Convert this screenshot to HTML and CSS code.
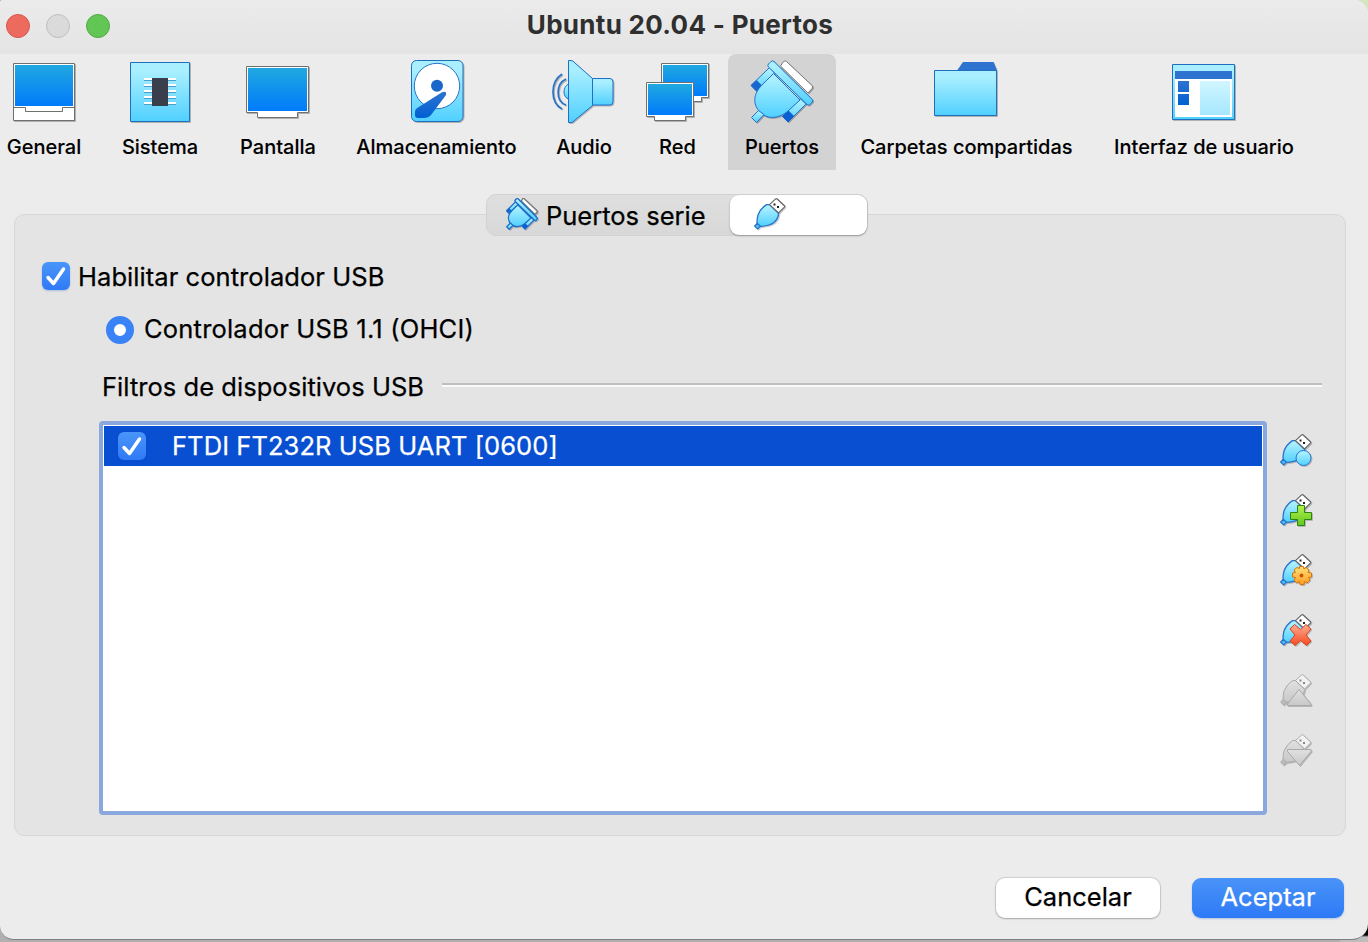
FILE: index.html
```html
<!DOCTYPE html>
<html lang="es">
<head>
<meta charset="utf-8">
<title>Ubuntu 20.04 - Puertos</title>
<link rel="stylesheet" href="styles.css">
</head>
<body>
<svg class="defs" width="0" height="0" aria-hidden="true">
  <defs>
    <linearGradient id="screen" x1="0" y1="0" x2="0" y2="1"><stop offset="0" stop-color="#20a8e0"/><stop offset="1" stop-color="#007bfb"/></linearGradient>
    <linearGradient id="sky" x1="0" y1="0" x2="0" y2="1"><stop offset=".15" stop-color="#a9efff"/><stop offset="1" stop-color="#50d0ff"/></linearGradient>
    <linearGradient id="navy" x1="0" y1="0" x2="0" y2="1"><stop offset="0" stop-color="#2e73cf"/><stop offset="1" stop-color="#0060d2"/></linearGradient>
    <linearGradient id="pane" x1="0" y1="0" x2="0" y2="1"><stop offset="0" stop-color="#d0f6ff"/><stop offset="1" stop-color="#a6e7ff"/></linearGradient>
    <linearGradient id="green" x1="0" y1="0" x2="0" y2="1"><stop offset="0" stop-color="#b4f04e"/><stop offset="1" stop-color="#62c81d"/></linearGradient>
    <linearGradient id="orange" x1="0" y1="0" x2="0" y2="1"><stop offset="0" stop-color="#ffe17a"/><stop offset="1" stop-color="#ff9d22"/></linearGradient>
    <linearGradient id="red" x1="0" y1="0" x2="0" y2="1"><stop offset="0" stop-color="#ffac91"/><stop offset="1" stop-color="#f64a20"/></linearGradient>
    <linearGradient id="grey" x1="0" y1="0" x2="0" y2="1"><stop offset="0" stop-color="#e0e0e0"/><stop offset="1" stop-color="#c8c8c8"/></linearGradient>
    <symbol id="usb" viewBox="0 0 32 32">
      <path d="M15.500 6.600H12.500Q6.500 10.500 4 17Q2.600 22 3.200 26.500L5.200 28.300Q15 28.300 20 24.500Q24.300 20.500 24.600 15.600Z" fill="url(#sky)" stroke="#2873ca" stroke-width="1.300"/>
      <path d="M3.400 25.300L.6 28L3.700 31L6.500 28.300Z" fill="#4fbdf2" stroke="#2873ca" stroke-width="1.200"/>
      <path d="M15.500 6.600L21.600 .9Q22.400.3 23.200 1L30.400 7.700Q31 8.400 30.400 9.200L24.600 14.900Z" fill="#fff" stroke="#666" stroke-width="1.200"/>
      <path d="M19.500 5.500h2v2h-2zM23 8h2v2h-2z" fill="#222"/>
    </symbol>
    <symbol id="usb-off" viewBox="0 0 32 32">
      <path d="M15.500 6.600H12.500Q6.500 10.500 4 17Q2.600 22 3.200 26.500L5.200 28.300Q15 28.300 20 24.500Q24.300 20.500 24.600 15.600Z" fill="url(#grey)" stroke="#aaa"/>
      <path d="M3.400 25.300L.6 28L3.700 31L6.500 28.300Z" fill="#bbb" stroke="#aaa"/>
      <path d="M15.500 6.600L21.600 .9Q22.400.3 23.200 1L30.400 7.700Q31 8.400 30.400 9.200L24.600 14.900Z" fill="#f2f2f2" stroke="#a8a8a8"/>
      <path d="M19.500 5.500h2v2h-2zM23 8h2v2h-2z" fill="#888"/>
    </symbol>
    <symbol id="serial" viewBox="0 0 64 64">
      <path d="M30.500 6L33.500 1.500Q35 .2 36.500 1.500L62 25.500Q63.300 27 62 28.500L58 33Z" fill="#fff" stroke="#777"/>
      <path d="M19.500 7.500L1 25.500L6.500 31L25 13.500Z" fill="url(#sky)" stroke="#2473c9"/>
      <path d="M50 38.500L32.500 56.500L38 62L56 44Z" fill="url(#sky)" stroke="#2473c9"/>
      <path d="M6.500 20L.8 25.300L6.500 31.200L12.500 26Z" fill="#1767cf"/>
      <path d="M38.500 50.500L32.300 56.500L38 62.200L44 56Z" fill="#0a5fd2"/>
      <path d="M23.500 13.500L12 25C3 34 3 44 9 51C16 60 29 59 38 51L50 40Z" fill="url(#sky)" stroke="#1f6fc9"/>
      <path d="M8.500 50.500L1.500 57.500L6.500 62.500L14 54.500Z" fill="url(#sky)" stroke="#1f6fc9"/>
      <path d="M18.500 4L21 1.500Q22.500.3 24 1.500L62.300 39.500Q63.300 41 62.300 42L60 44.500Q58.500 45.800 57 44.500L18.500 7Q17 5.500 18.500 4Z" fill="url(#sky)" stroke="#1f6fc9"/>
    </symbol>
  </defs>
</svg>
<div class="window">
  <header class="titlebar">
    <div class="lights"><i class="light close"></i><i class="light minimize"></i><i class="light zoom"></i></div>
    <h1 class="title">Ubuntu 20.04 - Puertos</h1>
  </header>
  <nav class="toolbar">
    <div class="tool">
      <svg class="icon" viewBox="0 0 64 64"><path d="M1.500 3.500h61v57h-61z" fill="#fff" stroke="#707070"/><path d="M3 5h58v41H3z" fill="url(#screen)"/><path d="M1.500 47.500h12v4h37v-4h12" fill="none" stroke="#707070"/></svg>
      <span class="name">General</span>
    </div>
    <div class="tool">
      <svg class="icon" viewBox="0 0 64 64"><path d="M2.500 2.500h59v59h-59z" fill="url(#sky)" stroke="#1f6fbd"/><path d="M16 20.500h32M16 26.500h32M16 32.500h32M16 38.500h32M16 44.500h32" stroke="#4c9fc8"/><path d="M16 19h32M16 25h32M16 31h32M16 37h32M16 43h32" stroke="#fff" stroke-width="2"/><path d="M24 18h16v28H24z" fill="#393f4b"/></svg>
      <span class="name">Sistema</span>
    </div>
    <div class="tool">
      <svg class="icon" viewBox="0 0 64 64"><path d="M.5 6.500h62v46h-11v5h-40v-5H.5z" fill="#fff" stroke="#707070"/><path d="M2 8h59v43H2z" fill="url(#screen)"/></svg>
      <span class="name">Pantalla</span>
    </div>
    <div class="tool">
      <svg class="icon" viewBox="0 0 64 64"><rect x="6.500" y=".5" width="51.500" height="61" rx="5" fill="url(#sky)" stroke="#1f6fbd"/><circle cx="32" cy="26" r="22.700" fill="#fff" stroke="#2873ca"/><circle cx="32" cy="25.800" r="6" fill="#1a67cc"/><path d="M37 32.200Q42 30.500 41 35L26 55Q23.500 58 20 58H13Q10 58 10 55V51.500Q10 49 13 47.500Z" fill="url(#navy)"/></svg>
      <span class="name">Almacenamiento</span>
    </div>
    <div class="tool tool-audio">
      <svg class="icon" viewBox="0 0 64 64"><path d="M16.500 24C10.500 27 10.500 37 16.500 39" fill="url(#sky)" stroke="#1f6fc9"/><path d="M10 14C-2 22-2 42 10 49M14 19C3.500 24 3.500 41 14 45" fill="none" stroke="#2873ca" stroke-width="1.700"/><path d="M16.500.5H19Q21 .5 23 3L40.500 18.500V45.500L23 60Q21 62.500 19 62.500H16.500Z" fill="url(#sky)" stroke="#1f6fc9"/><path d="M40.500 18.500H58Q61 18.500 61 22V41.500Q61 45 58 45H40.500Z" fill="url(#sky)" stroke="#1f6fc9"/></svg>
      <span class="name">Audio</span>
    </div>
    <div class="tool">
      <svg class="icon" viewBox="0 0 64 64"><path d="M15.500 3.500h47v34h-7v4h-31v-4h-9z" fill="#fff" stroke="#707070"/><path d="M17 5h44v31H17z" fill="url(#screen)"/><path d="M.5 22.500h47v34h-8v4h-31v-4h-8z" fill="#fff" stroke="#707070"/><path d="M2 24h44v31H2z" fill="url(#screen)"/></svg>
      <span class="name">Red</span>
    </div>
    <div class="tool active">
      <svg class="icon" viewBox="0 0 64 64"><use href="#serial"/></svg>
      <span class="name">Puertos</span>
    </div>
    <div class="tool">
      <svg class="icon icon-folder" viewBox="0 0 64 64"><path d="M23 10.500L29 2h30.500L63 10.500z" fill="#2e73cf"/><path d="M.5 10.500h62v45H.5z" fill="url(#sky)" stroke="#1f6fbd"/></svg>
      <span class="name">Carpetas compartidas</span>
    </div>
    <div class="tool">
      <svg class="icon" viewBox="0 0 64 64"><path d="M.5 4.500h62v55H.5z" fill="url(#sky)" stroke="#1f6fbd"/><path d="M3 19h57v38H3z" fill="#fff"/><path d="M3 11h57v8H3z" fill="#2e73cf"/><path d="M6 21h11v11H6zM6 34h11v11H6z" fill="url(#navy)"/><path d="M28 21h30v34H28z" fill="url(#pane)"/></svg>
      <span class="name">Interfaz de usuario</span>
    </div>
  </nav>
  <main class="panel">
    <div class="tabs">
      <div class="tab"><svg class="small-icon" viewBox="0 0 64 64"><use href="#serial" class="bold-lines"/></svg><span class="tab-text">Puertos serie</span></div>
      <div class="tab selected"><svg class="small-icon" viewBox="0 0 32 32"><use href="#usb"/></svg></div>
    </div>
    <div class="option enable">
      <span class="check"><svg viewBox="0 0 28 28"><path d="M6 15.500L11.500 21.500L21.500 7" /></svg></span>
      <span class="enable-text">Habilitar controlador USB</span>
    </div>
    <div class="option controller"><span class="radio"></span><span class="controller-text">Controlador USB 1.1 (OHCI)</span></div>
    <div class="filters-head"><span class="filters-text">Filtros de dispositivos USB</span><span class="rule"></span></div>
    <div class="filters">
      <div class="list">
        <div class="row"><span class="check"><svg viewBox="0 0 28 28"><path d="M6 15.500L11.500 21.500L21.500 7" /></svg></span><span class="row-text">FTDI FT232R USB UART [0600]</span></div>
      </div>
      <div class="actions">
        <svg class="small-icon" viewBox="0 0 32 32"><use href="#usb"/><circle cx="23.500" cy="24" r="7.500" fill="url(#sky)" stroke="#2873ca"/></svg>
        <svg class="small-icon" viewBox="0 0 32 32"><use href="#usb"/><path d="M17.500 11.500h7v7h7v7h-7v6h-7v-6h-7v-7h7z" fill="url(#green)" stroke="#2b8510"/></svg>
        <svg class="small-icon" viewBox="0 0 32 32"><use href="#usb"/><path d="M19.500 12.500h4l.5 2.500 2-1.500 3 2.500-1 2.500 3.500.5v4l-3 .5 1.500 2.500-3 3-2.500-1.500-.5 3h-4l-.5-3-3 1.500-2.500-3 1.500-2.500-3-.5v-4l3-.5-1.500-2.500 3-2.500 2.500 1z" fill="url(#orange)" stroke="#d9730b"/><circle cx="21.500" cy="21.500" r="1.900" fill="#c85106"/></svg>
        <svg class="small-icon" viewBox="0 0 32 32"><use href="#usb"/><path d="M14.500 10.500L20.500 15.500L26 10.500L31 15L26 21L31 27L26.500 31.500L20.500 26.500L15 31.500L10 27L15 21L10 15Z" fill="url(#red)" stroke="#d64220"/></svg>
        <svg class="small-icon" viewBox="0 0 32 32"><use href="#usb-off"/><path d="M19 15.500L31 30V31.500H7.500V30Z" fill="url(#grey)" stroke="#aaa"/></svg>
        <svg class="small-icon" viewBox="0 0 32 32"><use href="#usb-off"/><path d="M7.500 15.500H31V17.500L19.500 31.500L7.500 17.500Z" fill="url(#grey)" stroke="#aaa"/></svg>
      </div>
    </div>
  </main>
  <footer class="buttons"><div class="button"><span class="cancel-text">Cancelar</span></div><div class="button primary"><span class="accept-text">Aceptar</span></div></footer>
</div>
</body>
</html>
```
FILE: styles.css
```css
* { box-sizing: border-box; }
body { margin: 0; width: 1368px; height: 942px; overflow: hidden; background: linear-gradient(90deg, #b0b0b0 0 1340px, transparent 1340px), linear-gradient(#d4e6bd 0 40px, #000 40px 935px, #bdbdbd 937px); font-family: Inter, "Liberation Sans", sans-serif; color: #000; -webkit-text-stroke: .25px currentColor; }
.defs { display: block; height: 0; }
.window { height: 940px; background: #ececec; border-bottom: 1px solid #808080; border-radius: 3px 14px 16px 14px; overflow: hidden; }
.titlebar { display: grid; grid-template-columns: 110px 1fr 110px; align-items: center; height: 54px; padding-bottom: 2px; background: linear-gradient(#ebebeb, #e4e4e4); }
.lights { display: flex; gap: 16px; padding-left: 6px; }
.light { width: 24px; height: 24px; border-radius: 50%; border: 1px solid; }
.close { background: #ed6a5f; border-color: #d5564b; }
.minimize { background: #dadada; border-color: #bfbfbf; }
.zoom { background: #62c655; border-color: #51a945; }
.title { margin: 0; padding: 0 8px 2px 0; text-align: center; font-size: 26px; line-height: 50px; font-weight: 650; letter-spacing: .3px; color: #2f2f2f; -webkit-text-stroke: 0; }
.toolbar { display: grid; grid-template-columns: 88px 144px 92px 225px 78px 101px 108px 261px 214px; height: 116px; }
.tool { display: flex; flex-direction: column; align-items: center; padding-top: 6px; white-space: nowrap; }
.tool-audio { padding-right: 8px; }
.active { background: #d3d3d3; border-radius: 8px 8px 0 0; }
.icon { display: block; width: 64px; height: 64px; filter: drop-shadow(1px 1px 0 rgba(0,0,0,.25)); }
.icon-folder { margin-right: 1px; }
.name { margin-top: 10px; font-size: 20px; line-height: 26px; font-weight: 500; letter-spacing: 0; -webkit-text-stroke: .1px currentColor; }
.panel { width: 1332px; height: 622px; margin: 44px 0 0 14px; border: 1px solid #d7d7d7; border-radius: 10px; background: #e4e4e4; }
.tabs { display: flex; width: 382px; height: 42px; margin: -21px 0 0 471px; border: 1px solid #d2d2d2; border-radius: 10px; background: linear-gradient(#dfdfdf, #d8d8d8); }
.tab { display: flex; align-items: center; width: 243px; padding-left: 19px; white-space: nowrap; }
.selected { width: 137px; padding-left: 24px; border-radius: 9px; background: #fff; box-shadow: 0 1px 2px rgba(0,0,0,.3); }
.small-icon { display: block; width: 32px; height: 32px; flex: none; filter: drop-shadow(1px 1px 0 rgba(0,0,0,.2)); }
.tab .small-icon { margin-bottom: 2px; }
.bold-lines { stroke-width: 2.6; }
.tab-text { margin-left: 8px; padding-top: 2px; font-size: 25.500px; line-height: 32px; }
.option { display: flex; align-items: center; font-size: 25.500px; line-height: 32px; height: 32px; }
.enable { margin: 24px 0 0 27px; gap: 8px; }
.enable-text { padding-top: 2px; letter-spacing: .06px; }
.controller { margin: 22px 0 0 91px; gap: 10px; }
.controller-text { padding-bottom: 2px; letter-spacing: .2px; }
.check { display: block; width: 28px; height: 28px; flex: none; border-radius: 6px; background: linear-gradient(#4a95f8, #2f7af6); box-shadow: 0 1px 2px rgba(0,80,200,.25); }
.check svg { display: block; fill: none; stroke: #fff; stroke-width: 3.500; stroke-linecap: round; stroke-linejoin: round; }
.radio { width: 28px; height: 28px; border: 8px solid #3a83f7; border-radius: 50%; background: #fff; }
.filters-head { display: flex; height: 34px; margin: 24px 23px 0 87px; font-size: 25.500px; line-height: 34px; letter-spacing: .04px; }
.rule { flex: 1; height: 4px; margin: 13px 0 0 18px; border-top: 2px solid #bfbfbf; border-bottom: 2px solid #fafafa; }
.filters { display: flex; gap: 13px; margin: 17px 0 0 84px; }
.list { width: 1168px; height: 394px; border: 4px solid #8aa8de; border-radius: 4px; background: #fff; padding: 1px; }
.row { display: flex; align-items: center; height: 40px; padding-left: 14px; color: #fff; background: #084fd1; font-size: 25.500px; }
.row-text { margin-left: 26px; padding-bottom: 2px; letter-spacing: .07px; }
.actions { display: flex; flex-direction: column; gap: 28px; padding-top: 13px; }
.buttons { display: flex; gap: 32px; padding: 42px 24px 0 996px; font-size: 25.500px; }
.button { width: 164px; height: 40px; line-height: 38px; text-align: center; border-radius: 9px; background: #fff; box-shadow: 0 0 1px 1px rgba(0,0,0,.12), 0 1px 2px rgba(0,0,0,.2); }
.primary { width: 152px; color: #fff; background: linear-gradient(#4993f8, #2e7af6); box-shadow: 0 1px 2px rgba(0,80,200,.25); }
```
